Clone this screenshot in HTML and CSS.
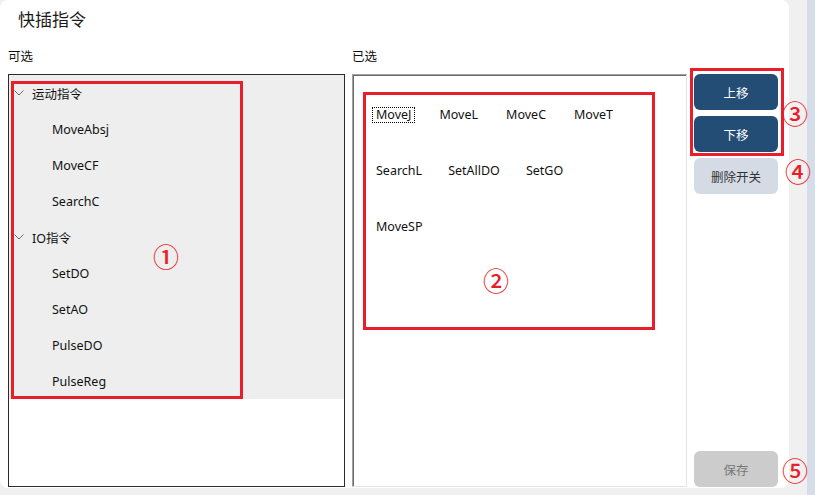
FILE: index.html
```html
<!DOCTYPE html>
<html lang="zh-CN">
<head>
<meta charset="utf-8">
<title>快插指令</title>
<link rel="stylesheet" href="styles.css">
</head>
<body>
<div class="screen">
  <div class="card">
    <h1 class="title">快插指令</h1>
    <div class="main">
      <section class="col col-left">
        <div class="label">可选</div>
        <div class="box tree-box">
          <ul class="tree">
            <li class="row group"><svg class="chev" width="10" height="6" viewBox="0 0 10 6"><polyline points="0.5,0.5 5,5 9.5,0.5" fill="none" stroke="#6a6a6a" stroke-width="1"/></svg><span>运动指令</span></li>
            <li class="row leaf">MoveAbsj</li>
            <li class="row leaf">MoveCF</li>
            <li class="row leaf">SearchC</li>
            <li class="row group"><svg class="chev" width="10" height="6" viewBox="0 0 10 6"><polyline points="0.5,0.5 5,5 9.5,0.5" fill="none" stroke="#6a6a6a" stroke-width="1"/></svg><span>IO指令</span></li>
            <li class="row leaf">SetDO</li>
            <li class="row leaf">SetAO</li>
            <li class="row leaf">PulseDO</li>
            <li class="row leaf">PulseReg</li>
          </ul>
          <div class="mark mark-1"></div>
          <span class="num num-1">①</span>
        </div>
      </section>
      <section class="col col-right">
        <div class="label">已选</div>
        <div class="box sel-box">
          <div class="flow">
            <div class="flow-row row-a">
              <span class="item focused">MoveJ</span>
              <span class="item">MoveL</span>
              <span class="item">MoveC</span>
              <span class="item">MoveT</span>
            </div>
            <div class="flow-row">
              <span class="item">SearchL</span>
              <span class="item">SetAllDO</span>
              <span class="item">SetGO</span>
            </div>
            <div class="flow-row">
              <span class="item">MoveSP</span>
            </div>
          </div>
          <div class="mark mark-2"></div>
          <span class="num num-2">②</span>
        </div>
      </section>
      <aside class="actions">
        <div class="move-group">
          <button class="btn btn-primary">上移</button>
          <button class="btn btn-primary">下移</button>
          <div class="mark mark-3"></div>
          <span class="num num-3">③</span>
        </div>
        <div class="btn-wrap">
          <button class="btn btn-light">删除开关</button>
          <span class="num num-4">④</span>
        </div>
        <div class="btn-wrap save-wrap">
          <button class="btn btn-disabled">保存</button>
          <span class="num num-5">⑤</span>
        </div>
      </aside>
    </div>
  </div>
  <div class="gutter"></div>
  <div class="strip"></div>
</div>
</body>
</html>
```

FILE: styles.css
```css
* { box-sizing: border-box; }

html, body {
  margin: 0;
  padding: 0;
}

body {
  background: #f0f0f0;
  font-family: "Noto Sans", "Noto Sans CJK SC", sans-serif;
  font-size: 12.5px;
  color: #111;
}

.screen {
  display: flex;
  width: 815px;
  height: 495px;
  overflow: hidden;
}

.card {
  width: 789px;
  height: 488px;
  flex: none;
  background: #fff;
  border-radius: 8px;
  padding-left: 8px;
  position: relative;
  z-index: 1;
}

.gutter {
  width: 18px;
  flex: none;
  background: #f0f0f0;
}

.strip {
  flex: 1;
  background: #d5dde8;
}

.title {
  margin: 0;
  height: 48px;
  padding: 9px 0 0 10px;
  font-size: 17px;
  line-height: 21px;
  font-weight: normal;
  color: #1a1a1a;
}

.main {
  display: grid;
  grid-template-columns: 344px 335px 102px;
}

.col-left { margin-right: 7px; width: 337px; }
.col-right { width: 335px; }

.label {
  height: 18px;
  line-height: 18px;
  margin-bottom: 8px;
  font-size: 12.5px;
  color: #111;
}

.box {
  position: relative;
  height: 413px;
}

.tree-box {
  border: 1px solid #2b2b2b;
  background: #fff;
}

.tree {
  list-style: none;
  margin: 0;
  padding: 0;
  background: #eeeeee;
}

.row {
  height: 36px;
  display: flex;
  align-items: center;
  white-space: nowrap;
}

.group {
  padding-left: 5px;
}

.chev {
  display: block;
  margin-right: 8px;
  flex: none;
}

.leaf {
  padding-left: 43px;
}

.sel-box {
  border-top: 1px solid #a0a0a0;
  border-left: 1px solid #a0a0a0;
  border-right: 1px solid #e3e3e3;
  border-bottom: 1px solid #e3e3e3;
  box-shadow: inset 1px 1px 0 #6b6b6b;
  background: #fff;
}

.flow {
  padding: 32px 0 0 19px;
  display: flex;
  flex-direction: column;
  row-gap: 40px;
}

.flow-row {
  display: flex;
  column-gap: 18px;
}

.flow-row.row-a {
  column-gap: 20px;
}

.item {
  height: 16px;
  line-height: 16px;
  padding: 0 3px;
  border: 1px solid transparent;
  white-space: nowrap;
  display: flex;
  align-items: center;
}

.item.focused {
  border: 1px dotted #000;
}

.mark {
  position: absolute;
  border: 3px solid #e81f2a;
  pointer-events: none;
}

.mark-1 { left: 2px; top: 6px; width: 232px; height: 318px; }
.mark-2 { left: 10px; top: 17px; width: 292px; height: 238px; }
.mark-3 { left: -4px; top: -6px; width: 94px; height: 88px; }

.num {
  position: absolute;
  font-family: "Noto Sans CJK SC", sans-serif;
  font-weight: 500;
  font-size: 26px;
  line-height: 26px;
  width: 26px;
  height: 26px;
  text-align: center;
  color: #e81f2a;
}

.num-1 { left: 144px; top: 168px; }
.num-2 { left: 130px; top: 192px; }
.num-3 { left: 88px; top: 26px; }
.num-4 { left: 91px; top: 0px; }
.num-5 { left: 88px; top: 6px; }

.actions {
  padding-left: 7px;
  margin-top: 26px;
  height: 413px;
  display: flex;
  flex-direction: column;
}

.move-group {
  position: relative;
  display: flex;
  flex-direction: column;
  row-gap: 6px;
  margin-bottom: 6px;
}

.btn-wrap {
  position: relative;
}

.save-wrap {
  margin-top: auto;
}

.btn {
  display: block;
  width: 84px;
  height: 36px;
  border: none;
  border-radius: 6px;
  font-family: "Noto Sans", "Noto Sans CJK SC", sans-serif;
  font-size: 12.5px;
  padding: 0;
}

.btn-primary {
  background: #234d75;
  color: #fff;
}

.btn-light {
  background: #d4dbe5;
  color: #333;
}

.btn-disabled {
  background: #cccccc;
  color: #777;
}
```
